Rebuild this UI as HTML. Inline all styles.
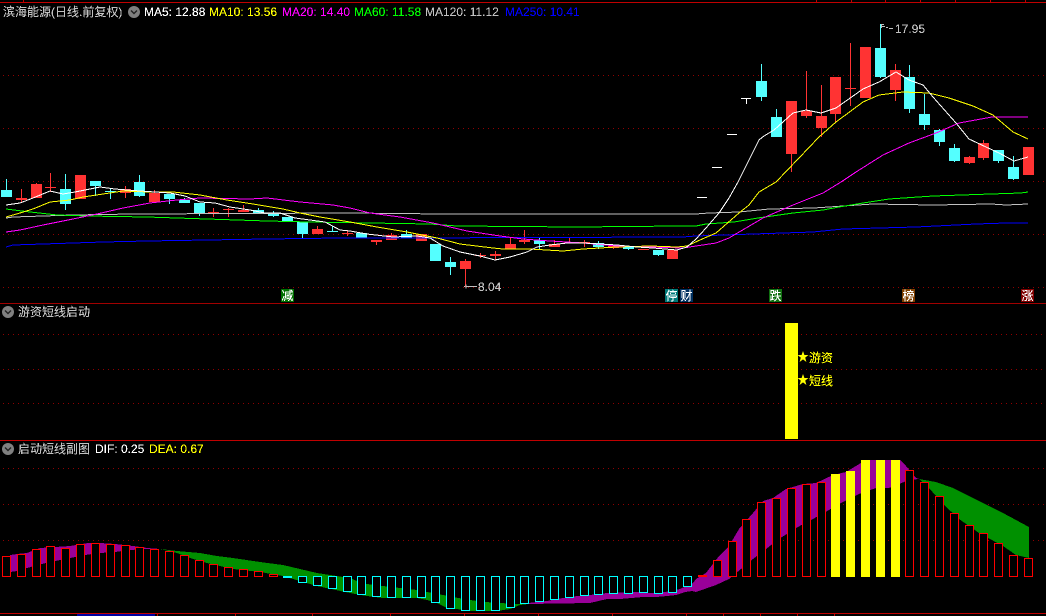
<!DOCTYPE html>
<html lang="zh">
<head>
<meta charset="utf-8">
<title>滨海能源</title>
<style>
html,body{margin:0;padding:0;background:#000;width:1046px;height:616px;overflow:hidden}
svg{display:block;position:absolute;left:0;top:0}
text{font-family:"Liberation Sans","WenQuanYi Zen Hei","Noto Sans CJK SC",sans-serif;font-size:12px}
.c{shape-rendering:crispEdges}
</style>
</head>
<body>
<svg width="1046" height="616" viewBox="0 0 1046 616" xmlns="http://www.w3.org/2000/svg">
<defs>
<filter id="a" filterUnits="userSpaceOnUse" x="0" y="0" width="1046" height="616" color-interpolation-filters="sRGB">
<feComponentTransfer><feFuncA type="discrete" tableValues="0 1 1"/></feComponentTransfer>
</filter>
</defs>
<g class="c">
<!-- frame lines -->
<path fill="none" stroke="#c00000" d="M0 2.5H1046M23.5 0V2M816.5 0V2M851.5 0V2M885.5 0V2M920.5 0V2M955.5 0V2M990.5 0V2M1025.5 0V2M0 440.5H1046M0 613.5H1046M157.5 613V616M235.5 613V616M312.5 613V616M390.5 613V616M464.5 613V616M538.5 613V616M612.5 613V616M686.5 613V616M723.5 613V616M760.5 613V616M797.5 613V616M834.5 613V616"/>
<path fill="none" stroke="#a00000" d="M0 303.5H1046"/>
<rect x="77" y="614" width="78" height="2" fill="#0000a0"/>
<!-- grid -->
<path fill="none" stroke="#900000" stroke-dasharray="1 4" d="M3 75.5H1046M3 128.5H1046M3 181.5H1046M3 234.5H1046M3 287.5H1046M3 334.5H782M3 369.5H782M3 403.5H782M801 334.5H1046M801 369.5H1046M801 403.5H1046M3 468.5H1046M3 504.5H1046M3 540.5H1046"/>
<!-- candles -->
<path fill="none" stroke="#54ffff" d="M6.5 179V190M65.5 174V210M95.5 186V196M110.5 189V199M139.5 175V197M169.5 199V204M184.5 198V200M199.5 213V216M258.5 208V210M273.5 211V217M302.5 234V239M332.5 226V231M406.5 230V234M450.5 257V275M539.5 238V250M598.5 241V249M628.5 249V250M658.5 255V256M761.5 64V101M776.5 109V117M880.5 24V78M909.5 65V113M924.5 94V130M939.5 129V146M954.5 144V162M998.5 161V163M1013.5 156V180"/>
<path fill="#54ffff" d="M1 190h11v7h-11zM60 189h11v15h-11zM90 181h11v5h-11zM105 191h11v1h-11zM134 182h11v14h-11zM164 194h11v5h-11zM179 200h11v3h-11zM194 203h11v10h-11zM253 210h11v3h-11zM268 213h11v3h-11zM282 217h11v4h-11zM297 222h11v12h-11zM327 231h11v1h-11zM356 233h11v5h-11zM401 234h11v4h-11zM430 244h11v17h-11zM445 262h11v5h-11zM534 240h11v4h-11zM593 243h11v4h-11zM623 247h11v2h-11zM653 250h11v5h-11zM756 81h11v16h-11zM771 117h11v20h-11zM875 48h11v29h-11zM904 77h11v32h-11zM919 114h11v11h-11zM934 130h11v12h-11zM949 148h11v13h-11zM993 150h11v11h-11zM1008 167h11v12h-11z"/>
<path fill="none" stroke="#ff3333" d="M21.5 189V202M36.5 183V184M50.5 173V192M125.5 186V198M154.5 190V193M213.5 208V217M228.5 208V217M243.5 205V212M317.5 226V229M347.5 230V236M376.5 242V245M391.5 233V235M465.5 259V287M480.5 253V258M495.5 251V260M510.5 238V244M524.5 230V244M554.5 240V244M569.5 238V243M584.5 240V247M613.5 248V249M791.5 154V172M806.5 71V118M821.5 85V137M835.5 114V123M850.5 43V106M895.5 64V101M969.5 156V164M983.5 140V160"/>
<path fill="#ff3333" d="M16 198h11v2h-11zM31 184h11v14h-11zM45 187h11v1h-11zM75 175h11v24h-11zM120 189h11v4h-11zM149 193h11v9h-11zM208 212h11v1h-11zM223 209h11v1h-11zM238 210h11v2h-11zM312 229h11v5h-11zM342 233h11v1h-11zM371 240h11v2h-11zM386 235h11v5h-11zM416 234h11v7h-11zM460 261h11v8h-11zM475 255h11v1h-11zM490 254h11v2h-11zM505 244h11v5h-11zM519 240h11v2h-11zM549 244h11v3h-11zM564 242h11v1h-11zM579 242h11v1h-11zM608 246h11v2h-11zM638 249h11v1h-11zM667 250h11v9h-11zM786 101h11v53h-11zM801 111h11v5h-11zM816 116h11v12h-11zM830 77h11v37h-11zM845 88h11v1h-11zM860 47h11v51h-11zM890 70h11v20h-11zM964 157h11v6h-11zM978 143h11v15h-11zM1023 147h11v28h-11z"/>
<path fill="none" stroke="#fff" d="M697 197.5H707M712 167.5H722M727 134.5H737M741 98.5H751M746.5 98V104"/>
<!-- MA lines -->
<g fill="none">
<polyline stroke="#0000ff" stroke-width="1" points="6,247 13,245 43,244 73,243 103,242 147,241 207,240 267,239 340,238 400,238 683,237 696,236 753,234 813,232 843,229 916,227 976,224 1006,223 1028,223"/>
<polyline stroke="#c0c0c0" points="6,218 13,217 73,215 133,214 350,213 443,214 503,214 620,214 696,214 709,213 739,212 769,209 814,208 858,205 873,204 933,205 991,204 1006,205 1028,204"/>
<polyline stroke="#00ff00" points="6,209 30,212 57,215 87,216 147,217 177,218 207,219 237,220 267,221 310,222 430,224 457,226 577,227 680,226 696,226 706,224 734,222 758,218 793,213 823,210 839,207 863,203 889,199 933,196 991,194 1021,193 1028,192"/>
<polyline stroke="#ff00ff" points="6,232 20,230 43,225 73,219 97,214 123,208 150,203 177,200 200,198 250,199 267,198 300,202 333,205 350,208 370,213 400,217 433,223 467,231 500,236 523,239 550,241 583,243 617,246 650,247 683,248 696,246 716,243 729,238 746,228 763,218 793,205 823,193 841,182 856,172 883,155 909,143 936,133 959,123 992,117 1028,117"/>
<polyline stroke="#ffff00" points="6,217 20,213 33,209 50,202 70,200 83,197 103,194 123,191 150,192 173,192 200,195 227,200 253,204 283,209 300,213 320,217 350,222 377,227 407,232 437,238 460,244 493,248 503,249 530,249 563,251 583,249 617,247 650,246 677,247 687,246 700,240 716,233 739,213 749,205 759,192 776,182 799,158 819,137 836,122 863,102 879,95 903,92 929,93 949,98 973,106 993,115 1013,132 1028,139"/>
<polyline stroke="#fff" points="6,205 20,203 33,198 50,191 63,194 75,192 100,187 115,189 140,191 170,193 185,196 200,202 215,203 230,207 250,210 265,213 280,213 295,218 310,220 325,222 340,230 350,231 367,234 393,237 417,236 430,238 443,246 460,252 480,256 495,260 510,257 527,252 537,247 550,245 567,243 583,243 600,244 617,245 637,247 653,248 677,250 687,247 696,239 706,228 719,213 729,198 738,182 748,162 759,140 764,136 774,130 793,113 806,110 821,113 836,108 863,89 879,82 896,72 909,80 923,85 933,97 956,123 969,139 986,147 999,153 1014,161 1028,157"/>
</g>
<!-- annotation arrows -->
<path fill="none" stroke="#c0c0c0" d="M881.5 24.5H884M881.5 24V28M882 26.5H885M886 27.5H888M889 28.5H893M466 286.5H477M466 284.5V288.5M464.5 286V287"/>
<!-- panel 2 bar -->
<rect x="785" y="323" width="13" height="116" fill="#ffff00"/>
<!-- panel 3 bands -->
<polygon fill="#990099" points="10,555 17,554 27,553 40,548 55,547 70,546 88,543 100,543 115,544 133,546 147,548 160,549 147,549 130,550 115,552 100,553 85,555 70,558 55,561 42,564 27,568 17,571 10,572"/>
<polygon fill="#009000" points="160,549 177,551 200,553 217,556 233,558 260,562 283,565 317,573 350,578 357,581 367,584 383,586 400,588 417,590 427,592 437,594 443,595 453,597 470,600 485,602 500,603 517,604 528,603 528,604 520,605 510,609 497,611 470,611 457,609 447,608 437,603 427,600 417,598 383,598 367,596 350,593 317,586 283,576 260,572 233,569 207,563 190,558 177,553"/>
<polygon fill="#990099" points="528,603 547,601 563,598 577,596 590,595 607,593 637,592 650,593 665,592 680,589 693,583 696,579 706,573 719,556 729,546 739,529 753,513 763,501 773,498 786,489 803,484 816,483 833,475 846,472 861,463 869,460 900,460 906,466 916,478 919,479 909,480 889,488 876,488 859,494 839,504 829,510 813,519 796,528 779,539 766,549 753,559 729,579 716,585 696,592 692,591 685,592 676,595 667,596 656,597 643,597 620,599 607,599 590,603 528,604"/>
<polygon fill="#009000" points="919,479 936,482 953,488 979,501 1003,513 1029,527 1029,558 1016,555 1003,546 979,533 959,519 943,504 929,488"/>
<!-- panel 3 red hollow bars -->
<path fill="#000" stroke="#ff0000" d="M2.5 556.5h8v20h-8zM17.5 554.5h8v22h-8zM32.5 549.5h8v27h-8zM46.5 546.5h8v30h-8zM61.5 548.5h8v28h-8zM76.5 544.5h8v32h-8zM91.5 543.5h8v33h-8zM106.5 544.5h8v32h-8zM121.5 545.5h8v31h-8zM135.5 547.5h8v29h-8zM150.5 549.5h8v27h-8zM165.5 551.5h8v25h-8zM180.5 555.5h8v21h-8zM195.5 560.5h8v16h-8zM209.5 564.5h8v12h-8zM224.5 567.5h8v9h-8zM239.5 569.5h8v7h-8zM254.5 571.5h8v5h-8zM269.5 574.5h8v2h-8zM713.5 560.5h8v16h-8zM728.5 541.5h8v35h-8zM742.5 519.5h8v57h-8zM757.5 502.5h8v74h-8zM772.5 498.5h8v78h-8zM787.5 488.5h8v88h-8zM802.5 484.5h8v92h-8zM817.5 482.5h8v94h-8zM905.5 470.5h8v106h-8zM920.5 482.5h8v94h-8zM935.5 496.5h8v80h-8zM950.5 513.5h8v63h-8zM965.5 525.5h8v51h-8zM979.5 533.5h8v43h-8zM994.5 543.5h8v33h-8zM1009.5 555.5h8v21h-8zM1024.5 558.5h8v18h-8z"/>
<rect x="698" y="575" width="9" height="2" fill="#ff0000"/>
<!-- cyan hollow bars -->
<path fill="#000" stroke="#00ffff" d="M298.5 576.5h8v6h-8zM313.5 576.5h8v9h-8zM328.5 576.5h8v12h-8zM343.5 576.5h8v15h-8zM357.5 576.5h8v18h-8zM372.5 576.5h8v20h-8zM387.5 576.5h8v21h-8zM402.5 576.5h8v21h-8zM417.5 576.5h8v21h-8zM431.5 576.5h8v26h-8zM446.5 576.5h8v32h-8zM461.5 576.5h8v34h-8zM476.5 576.5h8v34h-8zM491.5 576.5h8v34h-8zM506.5 576.5h8v31h-8zM520.5 576.5h8v27h-8zM535.5 576.5h8v25h-8zM550.5 576.5h8v23h-8zM565.5 576.5h8v21h-8zM580.5 576.5h8v19h-8zM594.5 576.5h8v18h-8zM609.5 576.5h8v17h-8zM624.5 576.5h8v17h-8zM639.5 576.5h8v16h-8zM654.5 576.5h8v17h-8zM668.5 576.5h8v16h-8zM683.5 576.5h8v10h-8z"/>
<rect x="283" y="576" width="9" height="2" fill="#00ffff"/>
<!-- yellow bars -->
<path fill="#ffff00" d="M831 474h9v103h-9zM846 471h9v106h-9zM861 460h9v117h-9zM876 460h9v117h-9zM891 460h9v117h-9z"/>
<!-- label tiles -->
<rect x="281" y="289" width="13" height="13" fill="#007000"/>
<rect x="665" y="289" width="13" height="13" fill="#007878"/>
<rect x="680" y="289" width="13" height="13" fill="#003060"/>
<rect x="769" y="289" width="13" height="13" fill="#107010"/>
<rect x="902" y="289" width="13" height="13" fill="#804000"/>
<rect x="1021" y="289" width="13" height="13" fill="#800000"/>
</g>
<!-- header icons -->
<g>
<circle cx="134" cy="12" r="6" fill="#808080"/><path d="M131 10.5l3 3 3-3" fill="none" stroke="#222" stroke-width="1.4"/>
<circle cx="8" cy="312" r="6" fill="#808080"/><path d="M5 310.5l3 3 3-3" fill="none" stroke="#222" stroke-width="1.4"/>
<circle cx="8" cy="449" r="6" fill="#808080"/><path d="M5 447.5l3 3 3-3" fill="none" stroke="#222" stroke-width="1.4"/>
</g>
<!-- stars -->
<polygon fill="#ffff00" points="803,351 804.4,355 808.5,355 805.2,357.6 806.4,362 803,359.4 799.6,362 800.8,357.6 797.5,355 801.6,355"/>
<polygon fill="#ffff00" points="803,374 804.4,378 808.5,378 805.2,380.6 806.4,385 803,382.4 799.6,385 800.8,380.6 797.5,378 801.6,378"/>
<!-- all text, thresholded to a hard pixel edge -->
<g filter="url(#a)">
<g fill="#fff">
<text x="281.5" y="300">减</text>
<text x="665.5" y="300">停</text>
<text x="680.5" y="300">财</text>
<text x="769.5" y="300">跌</text>
<text x="902.5" y="300">榜</text>
<text x="1021.5" y="300">涨</text>
</g>
<text x="3" y="16" fill="#c0c0c0">滨海能源(日线.前复权)</text>
<text x="144" y="16" fill="#ffffff">MA5: 12.88</text>
<text x="209" y="16" fill="#ffff00">MA10: 13.56</text>
<text x="282" y="16" fill="#ff00ff">MA20: 14.40</text>
<text x="354" y="16" fill="#00ff00">MA60: 11.58</text>
<text x="425" y="16" fill="#c0c0c0">MA120: 11.12</text>
<text x="505" y="16" fill="#0000ff">MA250: 10.41</text>
<text x="18" y="316" fill="#c0c0c0">游资短线启动</text>
<text x="18" y="453" fill="#c0c0c0">启动短线副图</text>
<text x="95" y="453" fill="#ffffff">DIF: 0.25</text>
<text x="149" y="453" fill="#ffff00">DEA: 0.67</text>
<text x="895" y="33" fill="#c0c0c0">17.95</text>
<text x="478" y="291" fill="#c0c0c0">8.04</text>
<text x="809" y="362" fill="#ffff00">游资</text>
<text x="809" y="385" fill="#ffff00">短线</text>
</g>
</svg>
</body>
</html>
